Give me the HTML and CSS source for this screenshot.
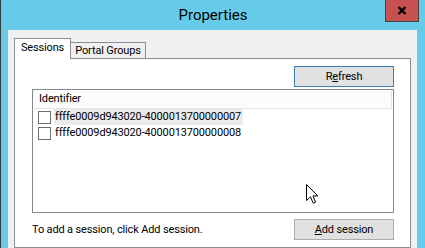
FILE: index.html
```html
<!DOCTYPE html>
<html lang="en">
<head>
    <meta charset="UTF-8">
    <title>Properties</title>
    <link rel="stylesheet" href="styles.css">
</head>
<body>
    <div class="window">
        <div class="titlebar">
            <div class="title">Properties</div>
            <div class="close">
                <svg width="10" height="9" viewBox="0 0 10 9">
                    <path d="M1.5 1 L8.5 8 M8.5 1 L1.5 8" stroke="#000" stroke-width="2.4" fill="none"/>
                </svg>
            </div>
        </div>

        <div class="client">
            <div class="tabs">
                <div class="tab active">Sessions</div>
                <div class="tab">Portal Groups</div>
            </div>

            <div class="panel">
                <div class="toolbar">
                    <button class="btn default">R<u>e</u>fresh</button>
                </div>

                <div class="list">
                    <div class="list-header">Identifier</div>
                    <div class="row">
                        <span class="check"></span>
                        <span class="item selected">ffffe0009d943020-4000013700000007</span>
                    </div>
                    <div class="row">
                        <span class="check"></span>
                        <span class="item">ffffe0009d943020-4000013700000008</span>
                    </div>
                </div>

                <div class="footer">
                    <span class="hint">To add a session, click Add session.</span>
                    <button class="btn"><u>A</u>dd session</button>
                </div>
            </div>
        </div>

        <!-- mouse pointer sitting over the list -->
        <svg class="cursor" width="13" height="21" viewBox="0 0 13 21">
            <path d="M0.5 0.5 L0.5 16.5 L4.5 12.8 L7.2 19.2 L9.6 18.2 L7 11.9 L11.8 11.9 Z" fill="#fff" stroke="#000" stroke-width="1"/>
        </svg>
    </div>
</body>
</html>
```

FILE: styles.css
```css
body {
    margin: 0;
    width: 425px;
    height: 248px;
    overflow: hidden;
    font-family: Roboto, "Noto Sans", sans-serif;
    font-size: 11px;
    letter-spacing: -0.15px;
    color: #000;
}
.window {
    position: relative;
    box-sizing: border-box;
    height: 248px;
    background-color: #66cae9;
    border-left: 1px solid #3a3a3a;
    display: flex;
    flex-direction: column;
}
.titlebar {
    height: 30px;
    display: grid;
    grid-template-columns: 1fr auto 1fr;
    align-items: start;
    flex-shrink: 0;
}
.title {
    grid-column: 2;
    font-size: 15px;
    letter-spacing: 0;
    line-height: 20px;
    padding-top: 5px;
}
.close {
    grid-column: 3;
    justify-self: end;
    margin-right: 6px;
    box-sizing: border-box;
    width: 34px;
    height: 22px;
    background-color: #c75050;
    border: 1px solid #444;
    border-top: none;
    display: flex;
    align-items: center;
    justify-content: center;
}
.client {
    flex: 1;
    margin: 0 8px 0 7px;
    padding: 8px 6px 0 6px;
    background-color: #f0f0f0;
    display: flex;
    flex-direction: column;
}
.tabs {
    display: flex;
    align-items: flex-end;
    height: 20px;
}
.tab {
    box-sizing: border-box;
    height: 16px;
    width: 76px;
    margin-left: -1px;
    border: 1px solid #898c95;
    border-bottom: none;
    background-color: #f0f0f0;
    text-align: center;
    line-height: 15px;
    white-space: nowrap;
}
.tab.active {
    position: relative;
    z-index: 1;
    margin-left: 0;
    width: 57px;
    height: 21px;
    margin-bottom: -1px;
    background-color: #fff;
    line-height: 17px;
}
.panel {
    flex: 1;
    background-color: #fff;
    border: 1px solid #898c95;
    padding: 7px 16px 0 17px;
}
.toolbar {
    display: flex;
    justify-content: flex-end;
}
.btn {
    box-sizing: border-box;
    width: 100px;
    height: 21px;
    padding: 0;
    font-family: inherit;
    font-size: 11px;
    letter-spacing: -0.15px;
    color: #000;
    background-color: #e1e1e1;
    border: 1px solid #adadad;
}
.btn.default {
    border-color: #3c7fb1;
}
.list {
    box-sizing: border-box;
    margin-top: 2px;
    height: 124px;
    border: 1px solid #828790;
}
.list-header {
    height: 18px;
    line-height: 17px;
    padding-left: 6px;
    background-color: #fcfcfc;
    border-bottom: 1px solid #e5e5e5;
    border-right: 1px solid #e5e5e5;
    margin-right: 1px;
}
.row {
    display: flex;
    align-items: center;
    height: 16px;
    padding-left: 5px;
}
.check {
    box-sizing: border-box;
    width: 13px;
    height: 13px;
    border: 1px solid #6d6d6d;
    margin-right: 3px;
}
.item {
    padding: 0 2px 0 1px;
    line-height: 16px;
}
.item.selected {
    background-color: #ebebeb;
}
.footer {
    display: flex;
    justify-content: space-between;
    align-items: center;
    margin-top: 6px;
}
.cursor {
    position: absolute;
    left: 305px;
    top: 184px;
}
```
